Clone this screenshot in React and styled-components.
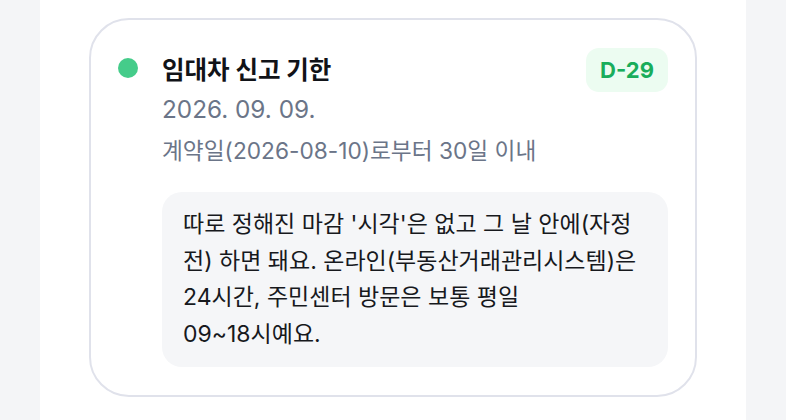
import React from 'react';
import styled, { createGlobalStyle } from 'styled-components';

const GlobalStyle = createGlobalStyle`
  html, body {
    margin: 0;
    padding: 0;
    background: #f4f5f7;
  }
  body {
    font-family: "Inter", "Noto Sans CJK KR", sans-serif;
    -webkit-font-smoothing: antialiased;
  }
`;

const Page = styled.div`
  width: 706px;
  margin-left: 40px;
  min-height: 420px;
  background: #ffffff;
  padding: 18px 49px;
  box-sizing: border-box;
`;

const Card = styled.article`
  display: grid;
  grid-template-columns: 20px 1fr;
  column-gap: 24px;
  padding: 28px 27px;
  border: 2px solid #e0e2eb;
  border-radius: 40px;
  background: #ffffff;
`;

const Dot = styled.span`
  width: 20px;
  height: 20px;
  margin-top: 10px;
  border-radius: 50%;
  background: ${({ color }) => color};
`;

const Content = styled.div`
  min-width: 0;
`;

const Header = styled.div`
  display: flex;
  align-items: center;
  justify-content: space-between;
  height: 44px;
`;

const Title = styled.h3`
  margin: 0;
  font-size: 24.5px;
  line-height: 32px;
  font-weight: 700;
  color: #111318;
`;

const Badge = styled.span`
  display: inline-flex;
  align-items: center;
  justify-content: center;
  width: 82px;
  height: 44px;
  border-radius: 13px;
  background: #ecfcf1;
  color: #19ad5b;
  font-size: 22px;
  font-weight: 700;
`;

const DateText = styled.div`
  margin-top: 1px;
  font-size: 24.3px;
  line-height: 32px;
  color: #6b7588;
`;

const SubText = styled.div`
  margin-top: 11px;
  font-size: 22.7px;
  line-height: 30px;
  color: #6b7588;
`;

const Note = styled.p`
  margin: 26px 0 0;
  padding: 14px 21px 15px;
  border-radius: 20px;
  background: #f5f6f8;
  font-size: 23px;
  line-height: 36.5px;
  color: #17191d;
`;

const App = () => (
  <>
    <GlobalStyle />
    <Page>
      <Card>
        <Dot color="#45cc8a" />
        <Content>
          <Header>
            <Title>임대차 신고 기한</Title>
            <Badge>D-29</Badge>
          </Header>
          <DateText>2026. 09. 09.</DateText>
          <SubText>계약일(2026-08-10)로부터 30일 이내</SubText>
          <Note>
            따로 정해진 마감 &apos;시각&apos;은 없고 그 날 안에(자정
            <br />
            전) 하면 돼요. 온라인(부동산거래관리시스템)은
            <br />
            24시간, 주민센터 방문은 보통 평일
            <br />
            09~18시예요.
          </Note>
        </Content>
      </Card>
    </Page>
  </>
);

export default App;
